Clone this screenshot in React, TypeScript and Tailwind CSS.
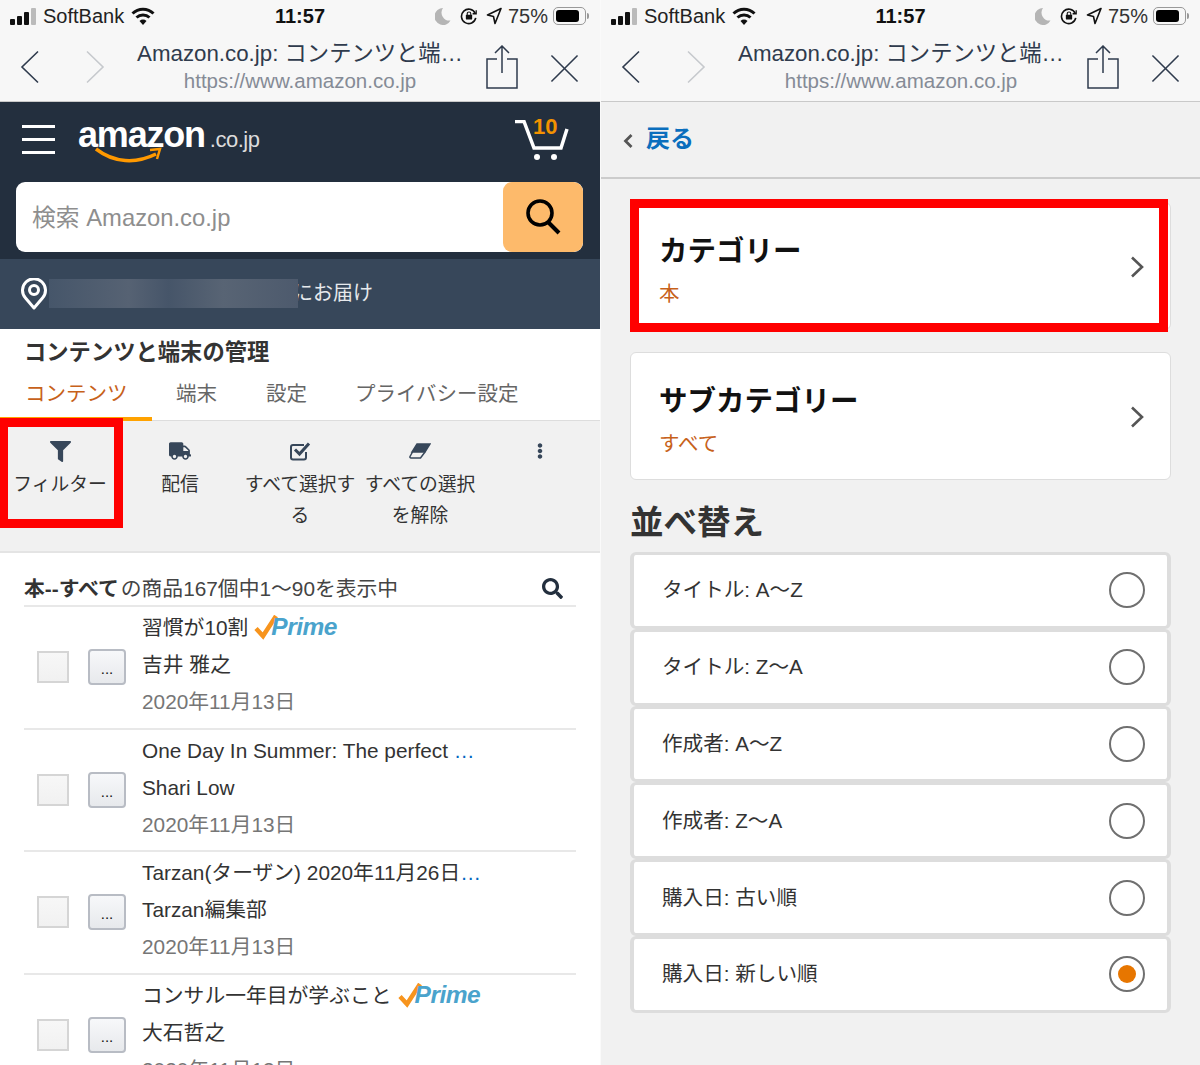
import React from 'react';
import { FaEllipsisV, FaFilter, FaSearch, FaTruck } from 'react-icons/fa';

const FONT = '"Liberation Sans", "Noto Sans CJK JP", sans-serif';

const StatusBar: React.FC = () => (
  <div className="relative flex h-[33px] items-center pb-px text-[20px] leading-none text-[#222]">
    <svg width="28" height="18" viewBox="0 0 28 18" className="ml-[10px]">
      <rect x="0" y="12" width="5" height="6" rx="1" fill="#111" />
      <rect x="7" y="9" width="5" height="9" rx="1" fill="#111" />
      <rect x="14" y="5" width="5" height="13" rx="1" fill="#111" />
      <rect x="21" y="1" width="5" height="17" rx="1" fill="#bbb" />
    </svg>
    <span className="ml-[5px]">SoftBank</span>
    <svg width="24" height="20" viewBox="0 0 24 20" className="ml-[7px]" fill="none" stroke="#111" strokeWidth="3">
      <path d="M1.500 7.500a15 15 0 0 1 21 0" />
      <path d="M5.500 11.500a9.500 9.500 0 0 1 13 0" />
      <path d="M12 19l-3.500-4a5 5 0 0 1 7 0z" fill="#111" stroke="none" />
    </svg>
    <span className="absolute left-1/2 -translate-x-1/2 font-bold text-[#111]">11:57</span>
    <div className="ml-auto mr-[11px] flex items-center">
      <svg width="16" height="18" viewBox="0 0 16 18">
        <path d="M8 1a8.500 8.500 0 1 0 7.500 12.500A8 8 0 0 1 8 1z" fill="#b5b5b5" />
      </svg>
      <svg width="18" height="18" viewBox="0 0 20 20" className="ml-[9px]" fill="none" stroke="#111" strokeWidth="1.800">
        <path d="M17.500 12a8 8 0 1 1-.6-5" />
        <path d="M18 3.500v4h-4" strokeWidth="1.400" />
        <rect x="6.500" y="8.500" width="7" height="5.500" rx="1" fill="#111" stroke="none" />
        <path d="M8 9V7.500a2 2 0 0 1 4 0V9" strokeWidth="1.200" />
      </svg>
      <svg width="16" height="18" viewBox="0 0 16 18" className="ml-[8px]" fill="none" stroke="#111" strokeWidth="1.600">
        <path d="M15 1.500L1.500 8l6 1.500 1.500 7z" strokeLinejoin="round" />
      </svg>
      <span className="ml-[6px] text-[#333]">75%</span>
      <div className="ml-[5px] flex h-[18px] w-[33px] items-center rounded-[5px] border border-[#999] p-[2px]">
        <div className="h-full w-[23px] rounded-[3px] bg-black" />
      </div>
      <div className="ml-px h-[6px] w-[2px] rounded-r bg-[#999]" />
    </div>
  </div>
);

const BrowserBar: React.FC = () => (
  <div className="flex h-[69px] items-center border-b border-[#c9c9c9] pb-[1px]">
    <svg width="20" height="34" viewBox="0 0 20 34" className="ml-[20px]" fill="none" stroke="#2f3b4d" strokeWidth="1.600">
      <path d="M18 1.500L2 17l16 15.500" />
    </svg>
    <svg width="20" height="34" viewBox="0 0 20 34" className="ml-[45px]" fill="none" stroke="#c6c9cd" strokeWidth="1.600">
      <path d="M2 1.500L18 17 2 32.500" />
    </svg>
    <div className="ml-[32px] flex w-[326px] flex-col items-center pt-[1px]">
      <div className="whitespace-nowrap text-[22.300px] leading-[27px] text-[#2f3b4d]">Amazon.co.jp: コンテンツと端…</div>
      <div className="whitespace-nowrap text-[20.500px] leading-[27px] text-[#858b96]">https://www.amazon.co.jp</div>
    </div>
    <svg width="32" height="44" viewBox="0 0 32 44" className="ml-[23px]" fill="none" stroke="#2f3b4d" strokeWidth="1.500">
      <path d="M11 14H1v29h30V14H21" />
      <path d="M16 28V1.500M9 8l7-7 7 7" />
    </svg>
    <svg width="29" height="29" viewBox="0 0 30 30" className="ml-[32px] mt-[3px]" fill="none" stroke="#2f3b4d" strokeWidth="1.600">
      <path d="M1.500 1.500l27 27M28.500 1.500l-27 27" />
    </svg>
  </div>
);

const Prime: React.FC = () => (
  <span className="mb-[4px] ml-[6px] inline-flex items-center align-middle">
    <svg width="25" height="25" viewBox="0 0 25 25" fill="none" stroke="#f7941d" strokeWidth="4.500">
      <path d="M2 13.500L9 21 22 1" />
    </svg>
    <span className="-ml-[8px] text-[24.500px] font-bold italic leading-none tracking-[-0.5px] text-[#4aa3cc]">Prime</span>
  </span>
);

const items = [
  { title: '習慣が10割', prime: true, author: '吉井 雅之' },
  { title: 'One Day In Summer: The perfect', more: ' …', author: 'Shari Low' },
  { title: 'Tarzan(ターザン) 2020年11月26日', more: '…', author: 'Tarzan編集部' },
  { title: 'コンサル一年目が学ぶこと', prime: true, author: '大石哲之' },
];

const ContentRow: React.FC<{ item: (typeof items)[number] }> = ({ item }) => (
  <div className="flex h-[122.600px] items-center border-b-2 border-[#e8e8e8]">
    <div className="ml-[13px] h-[32px] w-[32px] shrink-0 border-2 border-[#d5d5d5] bg-gradient-to-b from-[#f7f7f7] to-[#f1f1f1]" />
    <div className="ml-[19px] flex h-[36px] w-[38px] shrink-0 items-center justify-center rounded-[4px] border-2 border-[#b8bcc4] bg-gradient-to-b from-[#f7f8fa] to-[#e7e9ec] pt-[3px] text-[15px] leading-none text-[#111]">
      ...
    </div>
    <div className="ml-[16px] self-start whitespace-nowrap pt-[2px] text-[20.800px] leading-[37px] text-[#333]">
      <div>
        {item.title}
        {item.more && <span className="text-[#0066c0]">{item.more}</span>}
        {item.prime && <Prime />}
      </div>
      <div>{item.author}</div>
      <div className="text-[#767676]">2020年11月13日</div>
    </div>
  </div>
);

const toolbar = [
  { icon: <FaFilter size={21} />, label: 'フィルター' },
  { icon: <FaTruck size={22} />, label: '配信' },
  {
    icon: (
      <svg width="22" height="20" viewBox="0 0 22 20" fill="none" stroke="currentColor" strokeWidth="2">
        <path d="M17 11v5.500a2 2 0 0 1-2 2H4a2 2 0 0 1-2-2V6a2 2 0 0 1 2-2h11" />
        <path d="M6 8.500l4.500 4.500L20 2.500" strokeWidth="3" />
      </svg>
    ),
    label: 'すべて選択する',
  },
  {
    icon: (
      <svg width="22" height="16" viewBox="0 0 22 16" fill="none" stroke="currentColor" strokeWidth="1.500">
        <path d="M8 1h13l-5 8H3z" fill="currentColor" />
        <path d="M3.500 9L1 13.500c-.3.6 0 1.500 1 1.500h9.500l4.500-6" />
      </svg>
    ),
    label: 'すべての選択を解除',
  },
  { icon: <FaEllipsisV size={16} />, label: '' },
];

const LeftScreen: React.FC = () => (
  <div className="relative h-[1065px] w-[600px] shrink-0 overflow-hidden bg-[#f7f7f7]">
    <StatusBar />
    <BrowserBar />

    {/* Store header */}
    <div className="h-[157px] bg-[#232f3e] px-[16px]">
      <div className="flex h-[80px] items-center">
        <div className="mb-[6px] ml-[6px] flex h-[30px] w-[33px] flex-col justify-between pt-[1px]">
          <div className="h-[3px] bg-white" />
          <div className="h-[3px] bg-white" />
          <div className="h-[3px] bg-white" />
        </div>
        <div className="relative mb-[6px] ml-[23px] flex h-[60px] items-baseline pt-[2px] text-white">
          <span className="text-[36px] font-bold leading-[48px] tracking-[-1.200px]">amazon</span>
          <span className="ml-[5px] text-[22px] leading-none tracking-[-0.5px] text-[#dcdcdc]">.co.jp</span>
          <svg width="68" height="18" viewBox="0 0 68 18" className="absolute left-[17px] top-[38px]" fill="none" stroke="#f90" strokeWidth="3.500">
            <path d="M1 2c18 14 40 15 60 5" />
            <path d="M55 3l10-1-3 10" strokeWidth="2.500" />
          </svg>
        </div>
        <div className="relative ml-auto mr-[15px] h-[44px] w-[56px]">
          <svg width="56" height="44" viewBox="0 0 56 44" fill="none" stroke="#fff" strokeWidth="3.500" className="absolute left-0 top-0">
            <path d="M2 1.500h9L21 28h27l6-19" />
            <circle cx="24" cy="37" r="3" fill="#fff" stroke="none" />
            <circle cx="41" cy="37" r="3" fill="#fff" stroke="none" />
          </svg>
          <span className="absolute left-[20px] top-[-4px] text-[22px] font-bold leading-none text-[#f39200]">10</span>
        </div>
      </div>
      <div className="flex h-[70px] w-[567px] items-center overflow-hidden rounded-[9px] bg-white">
        <span className="ml-[16px] pt-[2px] text-[23.800px] text-[#8e8e8e]">検索 Amazon.co.jp</span>
        <div className="ml-auto flex h-full w-[80px] items-center justify-center rounded-[9px] bg-[#fdba6b]">
          <svg width="38" height="38" viewBox="0 0 38 38" fill="none" stroke="#000" strokeWidth="3.600">
            <circle cx="16" cy="15" r="12" />
            <path d="M24 24l11 11" strokeWidth="4" />
          </svg>
        </div>
      </div>
    </div>

    {/* Delivery address */}
    <div className="flex h-[70px] items-center bg-[#37475a] pl-[21px] text-[20px] text-[#e6e9ec]">
      <svg width="26" height="32" viewBox="0 0 26 32" fill="none" stroke="#fff" strokeWidth="3">
        <path d="M13 30L4.500 20A11.500 11.500 0 1 1 21.500 20z" strokeLinejoin="round" />
        <circle cx="13" cy="12" r="4.500" />
      </svg>
      <div className="relative z-10 mb-[2px] ml-[2px] h-[29px] w-[249px] bg-[linear-gradient(90deg,#46566a_0%,#566273_32%,#465569_48%,#586474_70%,#4d5a6d_100%)]" />
      <span className="-ml-[5px] pb-[2px]">にお届け</span>
    </div>

    {/* Title and tabs */}
    <div className="bg-white">
      <h1 className="pl-[24px] pt-[9px] text-[22.300px] font-bold leading-[30px] text-[#333]">コンテンツと端末の管理</h1>
      <div className="flex h-[53px] items-start border-b border-[#ddd] pt-[7px] text-[20.500px] leading-[38px] text-[#666]">
        <span className="-mt-[7px] h-[53px] w-[152px] border-b-4 border-[#ffa200] pl-[25px] pt-[7px] text-[#c7611a]">コンテンツ</span>
        <span className="ml-[24px]">端末</span>
        <span className="ml-[49px]">設定</span>
        <span className="ml-[48px]">プライバシー設定</span>
      </div>
    </div>

    {/* Action toolbar */}
    <div className="grid h-[132px] grid-cols-5 border-b-2 border-[#e4e4e4] bg-[#f1f1f1] text-[18.800px] leading-[31px] text-[#333]">
      {toolbar.map((tool, i) => (
        <div key={i} className="flex flex-col items-center pt-[19px] text-center">
          <div className="flex h-[22px] items-center text-[#37475a]">{tool.icon}</div>
          <div className="mt-[7px] w-[116px]">{tool.label}</div>
        </div>
      ))}
    </div>

    {/* Library list */}
    <div className="h-[600px] bg-white px-[24px]">
      <div className="flex h-[54px] items-end border-b-2 border-[#e8e8e8] text-[20.800px] leading-[32px] text-[#333]">
        <span className="font-bold">本--すべて</span>
        <span className="ml-[2px] text-[#444]">の商品167個中1〜90を表示中</span>
        <FaSearch size={21} className="mb-[6px] ml-auto mr-[13px] text-[#232f3e]" />
      </div>
      {items.map((item) => (
        <ContentRow key={item.title} item={item} />
      ))}
    </div>

    {/* Highlighted filter button */}
    <div className="absolute left-0 top-[418px] h-[110px] w-[123px] border-[9px] border-l-[8px] border-[#ff0000]" />
  </div>
);

const Chevron: React.FC = () => (
  <svg width="14" height="22" viewBox="0 0 14 22" fill="none" stroke="#555" strokeWidth="2.600" className="mt-[2px] shrink-0">
    <path d="M2 1.500L12 11 2 20.500" />
  </svg>
);

const FilterCard: React.FC<{ title: string; value: string }> = ({ title, value }) => (
  <div className="flex h-[128px] w-[541px] items-center rounded-[6px] border border-[#ddd] bg-white pl-[28px] pr-[26px]">
    <div className="flex-1 pt-[10px]">
      <div className="text-[28.500px] font-bold leading-[36px] text-[#111]">{title}</div>
      <div className="mt-[10px] text-[20.500px] leading-[30px] text-[#c7611a]">{value}</div>
    </div>
    <Chevron />
  </div>
);

const sortOptions = ['タイトル: A〜Z', 'タイトル: Z〜A', '作成者: A〜Z', '作成者: Z〜A', '購入日: 古い順', '購入日: 新しい順'];

const RightScreen: React.FC = () => (
  <div className="relative h-[1065px] w-[600px] shrink-0 overflow-hidden border-l border-[#fafafa] bg-[#f1f1f1]">
    <div className="bg-[#f7f7f7]">
      <StatusBar />
      <BrowserBar />
    </div>

    <div className="flex h-[77px] items-center border-b-2 border-[#ccc] pb-px pl-[22px]">
      <svg width="10" height="16" viewBox="0 0 10 16" fill="none" stroke="#555" strokeWidth="2.800" className="mt-[3px]">
        <path d="M8.500 2L2.500 8l6 6" />
      </svg>
      <span className="ml-[13px] text-[24px] font-bold text-[#0a6ebd]">戻る</span>
    </div>

    <div className="px-[29px] pt-[23px]">
      <FilterCard title="カテゴリー" value="本" />
      <div className="mt-[22px]">
        <FilterCard title="サブカテゴリー" value="すべて" />
      </div>
      <h2 className="mt-[21px] text-[33.500px] font-bold leading-[44px] text-[#333]">並べ替え</h2>
      <div className="mt-[7px] w-[541px]">
        {sortOptions.map((option, i) => (
          <div
            key={option}
            className="flex h-[76.800px] items-center rounded-[6px] border-x-4 border-y-[3px] border-[#ddd] bg-white pl-[28px] pr-[22px] text-[20.600px] text-[#333]"
          >
            <span className="flex-1 pt-[1px]">{option}</span>
            <div className="flex h-[36px] w-[36px] items-center justify-center rounded-full border-2 border-[#707070]">
              {i === 5 && <div className="h-[18px] w-[18px] rounded-full bg-[#e77600]" />}
            </div>
          </div>
        ))}
      </div>
    </div>

    {/* Highlighted category card */}
    <div className="absolute left-[29px] top-[199px] h-[133px] w-[538px] border-[9px] border-[#ff0000]" />
  </div>
);

const App: React.FC = () => (
  <div className="flex h-[1065px] w-[1200px] overflow-hidden" style={{ fontFamily: FONT }}>
    <LeftScreen />
    <RightScreen />
  </div>
);

export default App;
